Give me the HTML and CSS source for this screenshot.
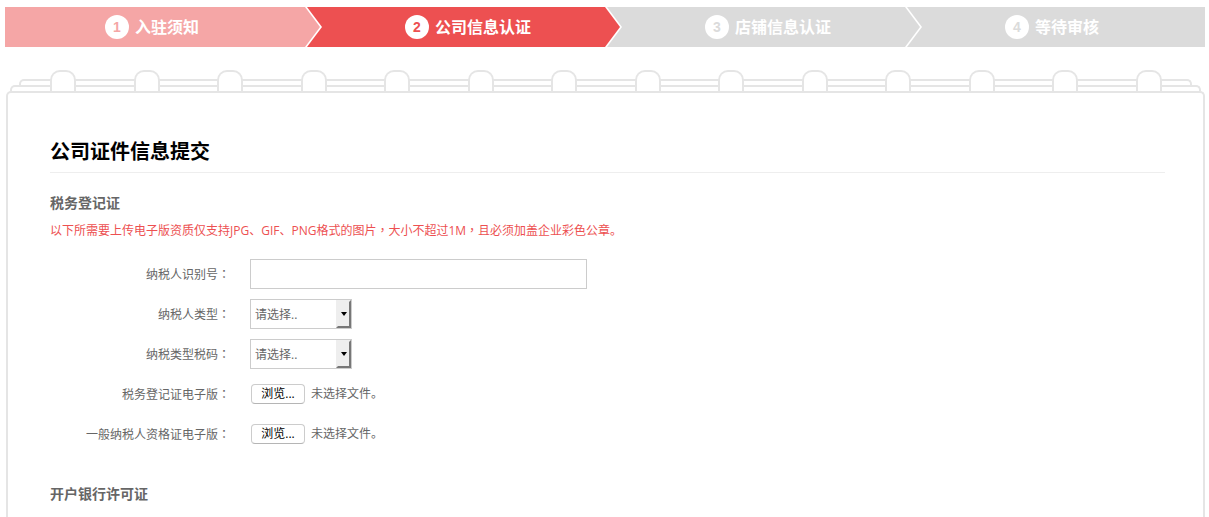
FILE: index.html
```
<!DOCTYPE html>
<html lang="zh-CN">
  <head>
    <meta charset="utf-8">
    <title>公司信息认证</title>
    <link rel="stylesheet" href="styles.css">
  </head>
  <body>
    <ol class="steps">
      <li class="done"><span class="num">1</span>入驻须知</li>
      <li class="current"><span class="num">2</span>公司信息认证</li>
      <li><span class="num">3</span>店铺信息认证</li>
      <li><span class="num">4</span>等待审核</li>
    </ol>

    <div class="notebook">
      <div class="sheet back"></div>
      <div class="sheet middle"></div>
      <!-- binder rings -->
      <div class="rings">
        <span></span><span></span><span></span><span></span><span></span><span></span><span></span>
        <span></span><span></span><span></span><span></span><span></span><span></span><span></span>
      </div>

      <form class="page">
        <h1>公司证件信息提交</h1>

        <h2>税务登记证</h2>
        <p class="notice">以下所需要上传电子版资质仅支持JPG、GIF、PNG格式的图片<span class="mark" lang="zh-TW">，</span>大小不超过1M<span class="mark" lang="zh-TW">，</span>且必须加盖企业彩色公章。</p>

        <div class="row">
          <label for="taxNo">纳税人识别号<span class="mark" lang="zh-TW">：</span></label>
          <input type="text" id="taxNo" class="text">
        </div>
        <div class="row">
          <label for="taxType">纳税人类型<span class="mark" lang="zh-TW">：</span></label>
          <div class="select">
            <select id="taxType">
              <option>请选择..</option>
              <option>一般纳税人</option>
              <option>小规模纳税人</option>
            </select>
          </div>
        </div>
        <div class="row">
          <label for="taxCode">纳税类型税码<span class="mark" lang="zh-TW">：</span></label>
          <div class="select">
            <select id="taxCode">
              <option>请选择..</option>
              <option>3%</option>
              <option>6%</option>
              <option>17%</option>
            </select>
          </div>
        </div>
        <div class="row">
          <label for="taxFile">税务登记证电子版<span class="mark" lang="zh-TW">：</span></label>
          <input type="file" id="taxFile" hidden>
          <button type="button" onclick="document.getElementById('taxFile').click()">浏览...</button>
          <span>未选择文件。</span>
        </div>
        <div class="row">
          <label for="payerFile">一般纳税人资格证电子版<span class="mark" lang="zh-TW">：</span></label>
          <input type="file" id="payerFile" hidden>
          <button type="button" onclick="document.getElementById('payerFile').click()">浏览...</button>
          <span>未选择文件。</span>
        </div>

        <h2 class="next">开户银行许可证</h2>
      </form>
    </div>
  </body>
</html>
```
FILE: styles.css
```
*,
*::before,
*::after {
  box-sizing: border-box;
}

body {
  display: flex;
  flex-direction: column;
  min-height: 100vh;
  margin: 0;
  padding: 7px 4px 0 5px;
  background: #fff;
  color: #666;
  font: 12px/20px "Open Sans", "Noto Sans CJK SC", sans-serif;
}

/* progress steps */
.steps {
  display: flex;
  margin: 0;
  padding: 0;
  list-style: none;
}

.steps li {
  --step: #dbdbdb;
  position: relative;
  display: flex;
  flex: 1;
  align-items: center;
  gap: 6px;
  height: 40px;
  padding-left: 100px;
  background: var(--step);
  color: #fff;
  font-size: 16px;
  font-weight: bold;
}

.steps .done {
  --step: #f5a6a6;
}

.steps .current {
  --step: #ed5051;
}

.steps li:not(:last-child)::before,
.steps li:not(:last-child)::after {
  content: "";
  position: absolute;
  top: 0;
  left: 100%;
  z-index: 1;
  height: 40px;
}

.steps li:not(:last-child)::before {
  width: 17px;
  background: #fff;
  clip-path: polygon(0 0, 2px 0, 100% 50%, 2px 100%, 0 100%);
}

.steps li:not(:last-child)::after {
  width: 15px;
  background: var(--step);
  clip-path: polygon(0 0, 100% 50%, 0 100%);
}

.num {
  width: 24px;
  height: 24px;
  border-radius: 50%;
  background: #fff;
  color: var(--step);
  font: bold 14px/24px "Liberation Sans", sans-serif;
  text-align: center;
}

/* notebook */
.notebook {
  position: relative;
  display: flex;
  flex: 1;
  flex-direction: column;
  margin-top: 23px;
  padding: 9px 0 0 1px;
}

.sheet {
  height: 6px;
  border: 2px solid #e5e5e5;
  border-bottom: 0;
  border-radius: 5px 5px 0 0;
}

.back {
  margin: 0 13px;
}

.middle {
  margin: 0 4px;
}

.rings {
  position: absolute;
  top: 0;
  left: 45px;
  right: 43px;
  display: flex;
  justify-content: space-between;
}

.rings span {
  width: 26px;
  height: 21px;
  border: 2px solid #e5e5e5;
  border-bottom: 0;
  border-radius: 10px 10px 0 0;
  background: #fff;
}

.page {
  flex: 1;
  padding: 39px 38px 0 42px;
  border: 2px solid #e5e5e5;
  border-bottom: 0;
  border-radius: 5px 5px 0 0;
}

h1 {
  margin: 0;
  border-bottom: 1px solid #eee;
  color: #000;
  font-size: 20px;
  line-height: 40px;
}

h2 {
  margin: 20px 0 8px;
  font-size: 14px;
  line-height: 20px;
}

.next {
  margin-top: 35px;
}

.notice {
  margin: 0 0 18px;
  color: #ed5051;
}

/* comma and colon sit in the middle of their box */
.mark {
  font-family: "Noto Sans CJK TC", sans-serif;
  line-height: 1;
}

.row {
  display: flex;
  align-items: center;
  height: 30px;
  margin-bottom: 10px;
}

.row label {
  width: 180px;
  margin-right: 20px;
  padding-top: 2px;
  text-align: right;
}

.text {
  width: 337px;
  height: 30px;
  padding: 0 4px;
  border: 1px solid #ccc;
  font: inherit;
}

.select {
  position: relative;
  width: 102px;
  height: 30px;
}

.select select {
  width: 100%;
  height: 100%;
  padding: 2px 16px 0 4px;
  border: 1px solid #ccc;
  border-radius: 0;
  appearance: none;
  background: #fff;
  color: #666;
  font: inherit;
}

.select::before {
  content: "";
  position: absolute;
  top: 1px;
  right: 1px;
  bottom: 1px;
  width: 15px;
  border: 2px solid #eee;
  border-right-color: #777;
  border-bottom-color: #777;
  background: #eee;
  pointer-events: none;
}

.select::after {
  content: "";
  position: absolute;
  top: 13px;
  right: 5px;
  border: 3px solid transparent;
  border-top: 4px solid #000;
  border-bottom: 0;
  pointer-events: none;
}

button {
  width: 54px;
  height: 20px;
  margin: 0 6px 0 1px;
  padding: 0;
  border: 1px solid #ccc;
  border-bottom-color: #b5b5b5;
  border-radius: 4px;
  background: #fff;
  color: #000;
  font: inherit;
  line-height: 18px;
}
```
